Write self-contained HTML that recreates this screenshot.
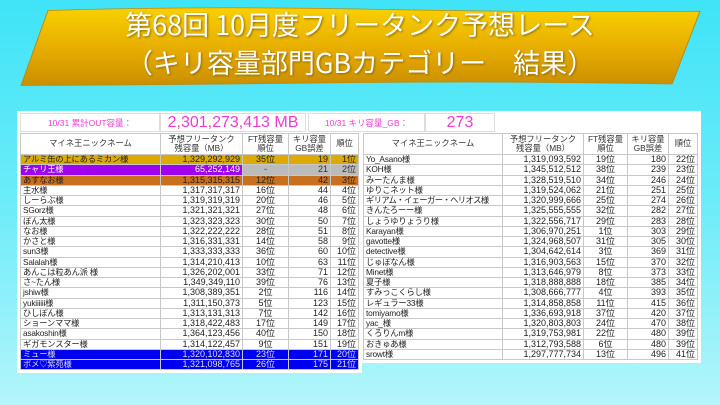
<!DOCTYPE html>
<html><head><meta charset="utf-8"><style>
*{margin:0;padding:0;box-sizing:border-box}
body{width:720px;height:405px;overflow:hidden;background:linear-gradient(#3fe3f7,#6cecf9 50%,#b4f5fb);font-family:"Liberation Sans","Noto Sans CJK JP",sans-serif;position:relative}
.ban{position:absolute;left:0;top:0;width:720px;height:90px}
.title{position:absolute;left:0;width:720px;text-align:center;color:#fff;font-family:"Noto Sans CJK JP",sans-serif;font-size:27px;line-height:32px;text-shadow:1px 1px 2px #8a6a00}
.panel{position:absolute;left:17px;top:111px;width:684px;height:252px;background:#fff}
.lower{position:absolute;left:17px;top:363px;width:345px;height:10px;background:#fff}
table{position:absolute;border-collapse:collapse;font-size:9px;color:#222;table-layout:fixed}
td{border:1px solid #c8c8c8;height:10.25px;line-height:9px;padding:0 2px;white-space:nowrap;overflow:hidden}
td:first-child{font-size:8.3px;letter-spacing:-0.2px}
th{border:1px solid #c8c8c8;font-weight:normal;font-size:8.3px;line-height:9.5px;height:21px;color:#333}
td.r{text-align:right}td.c{text-align:center}
.gold td{background:#dcaa00}.pur td{background:#a000f0;color:#fff}.brn td{background:#c8701e}.blu td{background:#0000f0;color:#ddd}
.info{position:absolute;top:113px;height:19px;border:1px solid #ddd;color:#f03ad8;display:flex;align-items:center}
</style></head><body>
<svg class="ban" viewBox="0 0 720 90"><defs><linearGradient id="g" x1="0" y1="0" x2="0" y2="1"><stop offset="0" stop-color="#f9d000"/><stop offset="0.6" stop-color="#e4a800"/><stop offset="1" stop-color="#c98f00"/></linearGradient></defs>
<path d="M48 14 Q200 8 360 12 Q540 17 700 15 L672 112 Q520 108 360 110 Q190 113 21 114 Z" transform="scale(1,0.75)" fill="url(#g)" stroke="#b98a10" stroke-width="1"/></svg>
<div class="title" style="top:8px">第68回 10月度フリータンク予想レース</div>
<div class="title" style="top:46px">（キリ容量部門GBカテゴリー　結果）</div>
<div class="panel"></div><div class="lower"></div>
<div class="info" style="left:20px;width:140px;font-size:8.5px;justify-content:center">10/31 累計OUT容量：</div>
<div class="info" style="left:160px;width:146px;font-size:16px;justify-content:center">2,301,273,413 MB</div>
<div class="info" style="left:308px;width:117px;font-size:8.5px;justify-content:center">10/31 キリ容量_GB：</div>
<div class="info" style="left:425px;width:70px;font-size:16px;justify-content:center">273</div>
<table style="left:20px;top:133px;width:338px">
<col style="width:140px"><col style="width:82px"><col style="width:46px"><col style="width:42px"><col style="width:28px">
<tr><th>マイネ王ニックネーム</th><th>予想フリータンク<br>残容量（MB）</th><th>FT残容量<br>順位</th><th>キリ容量<br>GB誤差</th><th>順位</th></tr>
<tr class="gold"><td>アルミ缶の上にあるミカン様</td><td class="r">1,329,292,929</td><td class="c">35位</td><td class="r">19</td><td class="r">1位</td></tr>
<tr class="pur"><td>チャリ王様</td><td class="r">65,252,149</td><td class="c" style="background:#bbb;color:#333">-</td><td class="r" style="background:#bbb;color:#333">21</td><td class="r" style="background:#bbb;color:#333">2位</td></tr>
<tr class="brn"><td>あすなお様</td><td class="r">1,315,315,315</td><td class="c">12位</td><td class="r">42</td><td class="r">3位</td></tr>
<tr><td>主水様</td><td class="r">1,317,317,317</td><td class="c">16位</td><td class="r">44</td><td class="r">4位</td></tr>
<tr><td>しーらぶ様</td><td class="r">1,319,319,319</td><td class="c">20位</td><td class="r">46</td><td class="r">5位</td></tr>
<tr><td>SGorz様</td><td class="r">1,321,321,321</td><td class="c">27位</td><td class="r">48</td><td class="r">6位</td></tr>
<tr><td>ぽん太様</td><td class="r">1,323,323,323</td><td class="c">30位</td><td class="r">50</td><td class="r">7位</td></tr>
<tr><td>なお様</td><td class="r">1,322,222,222</td><td class="c">28位</td><td class="r">51</td><td class="r">8位</td></tr>
<tr><td>かさと様</td><td class="r">1,316,331,331</td><td class="c">14位</td><td class="r">58</td><td class="r">9位</td></tr>
<tr><td>sun3様</td><td class="r">1,333,333,333</td><td class="c">36位</td><td class="r">60</td><td class="r">10位</td></tr>
<tr><td>Salalah様</td><td class="r">1,314,210,413</td><td class="c">10位</td><td class="r">63</td><td class="r">11位</td></tr>
<tr><td>あんこは粒あん派 様</td><td class="r">1,326,202,001</td><td class="c">33位</td><td class="r">71</td><td class="r">12位</td></tr>
<tr><td>さ~たん様</td><td class="r">1,349,349,110</td><td class="c">39位</td><td class="r">76</td><td class="r">13位</td></tr>
<tr><td>jshiw様</td><td class="r">1,308,389,351</td><td class="c">2位</td><td class="r">116</td><td class="r">14位</td></tr>
<tr><td>yukiiiiii様</td><td class="r">1,311,150,373</td><td class="c">5位</td><td class="r">123</td><td class="r">15位</td></tr>
<tr><td>ひしぽん様</td><td class="r">1,313,131,313</td><td class="c">7位</td><td class="r">142</td><td class="r">16位</td></tr>
<tr><td>ショーンママ様</td><td class="r">1,318,422,483</td><td class="c">17位</td><td class="r">149</td><td class="r">17位</td></tr>
<tr><td>asakoshin様</td><td class="r">1,364,123,456</td><td class="c">40位</td><td class="r">150</td><td class="r">18位</td></tr>
<tr><td>ギガモンスター様</td><td class="r">1,314,122,457</td><td class="c">9位</td><td class="r">151</td><td class="r">19位</td></tr>
<tr class="blu"><td>ミュー様</td><td class="r">1,320,102,830</td><td class="c">23位</td><td class="r">171</td><td class="r">20位</td></tr>
<tr class="blu"><td>ポメ♡紫苑様</td><td class="r">1,321,098,765</td><td class="c">26位</td><td class="r">175</td><td class="r">21位</td></tr>
</table>
<table style="left:363px;top:133px;width:334px">
<col style="width:139px"><col style="width:81px"><col style="width:44px"><col style="width:41px"><col style="width:29px">
<tr><th>マイネ王ニックネーム</th><th>予想フリータンク<br>残容量（MB）</th><th>FT残容量<br>順位</th><th>キリ容量<br>GB誤差</th><th>順位</th></tr>
<tr><td>Yo_Asano様</td><td class="r">1,319,093,592</td><td class="c">19位</td><td class="r">180</td><td class="r">22位</td></tr>
<tr><td>KOH様</td><td class="r">1,345,512,512</td><td class="c">38位</td><td class="r">239</td><td class="r">23位</td></tr>
<tr><td>みーたんま様</td><td class="r">1,328,519,510</td><td class="c">34位</td><td class="r">246</td><td class="r">24位</td></tr>
<tr><td>ゆりこネット様</td><td class="r">1,319,524,062</td><td class="c">21位</td><td class="r">251</td><td class="r">25位</td></tr>
<tr><td style="letter-spacing:-0.6px">ギリアム・イェーガー・ヘリオス様</td><td class="r">1,320,999,666</td><td class="c">25位</td><td class="r">274</td><td class="r">26位</td></tr>
<tr><td>きんたろーー様</td><td class="r">1,325,555,555</td><td class="c">32位</td><td class="r">282</td><td class="r">27位</td></tr>
<tr><td>しょうゆりょうり様</td><td class="r">1,322,556,717</td><td class="c">29位</td><td class="r">283</td><td class="r">28位</td></tr>
<tr><td>Karayan様</td><td class="r">1,306,970,251</td><td class="c">1位</td><td class="r">303</td><td class="r">29位</td></tr>
<tr><td>gavotte様</td><td class="r">1,324,968,507</td><td class="c">31位</td><td class="r">305</td><td class="r">30位</td></tr>
<tr><td>detective様</td><td class="r">1,304,642,614</td><td class="c">3位</td><td class="r">369</td><td class="r">31位</td></tr>
<tr><td>じゅぽなん様</td><td class="r">1,316,903,563</td><td class="c">15位</td><td class="r">370</td><td class="r">32位</td></tr>
<tr><td>Minet様</td><td class="r">1,313,646,979</td><td class="c">8位</td><td class="r">373</td><td class="r">33位</td></tr>
<tr><td>夏子様</td><td class="r">1,318,888,888</td><td class="c">18位</td><td class="r">385</td><td class="r">34位</td></tr>
<tr><td>すみっこくらし様</td><td class="r">1,308,666,777</td><td class="c">4位</td><td class="r">393</td><td class="r">35位</td></tr>
<tr><td>レギュラー33様</td><td class="r">1,314,858,858</td><td class="c">11位</td><td class="r">415</td><td class="r">36位</td></tr>
<tr><td>tomiyamo様</td><td class="r">1,336,693,918</td><td class="c">37位</td><td class="r">420</td><td class="r">37位</td></tr>
<tr><td>yac_様</td><td class="r">1,320,803,803</td><td class="c">24位</td><td class="r">470</td><td class="r">38位</td></tr>
<tr><td>くろりんm様</td><td class="r">1,319,753,981</td><td class="c">22位</td><td class="r">480</td><td class="r">39位</td></tr>
<tr><td>おきゅあ様</td><td class="r">1,312,793,588</td><td class="c">6位</td><td class="r">480</td><td class="r">39位</td></tr>
<tr><td>srowt様</td><td class="r">1,297,777,734</td><td class="c">13位</td><td class="r">496</td><td class="r">41位</td></tr>
</table>
</body></html>
